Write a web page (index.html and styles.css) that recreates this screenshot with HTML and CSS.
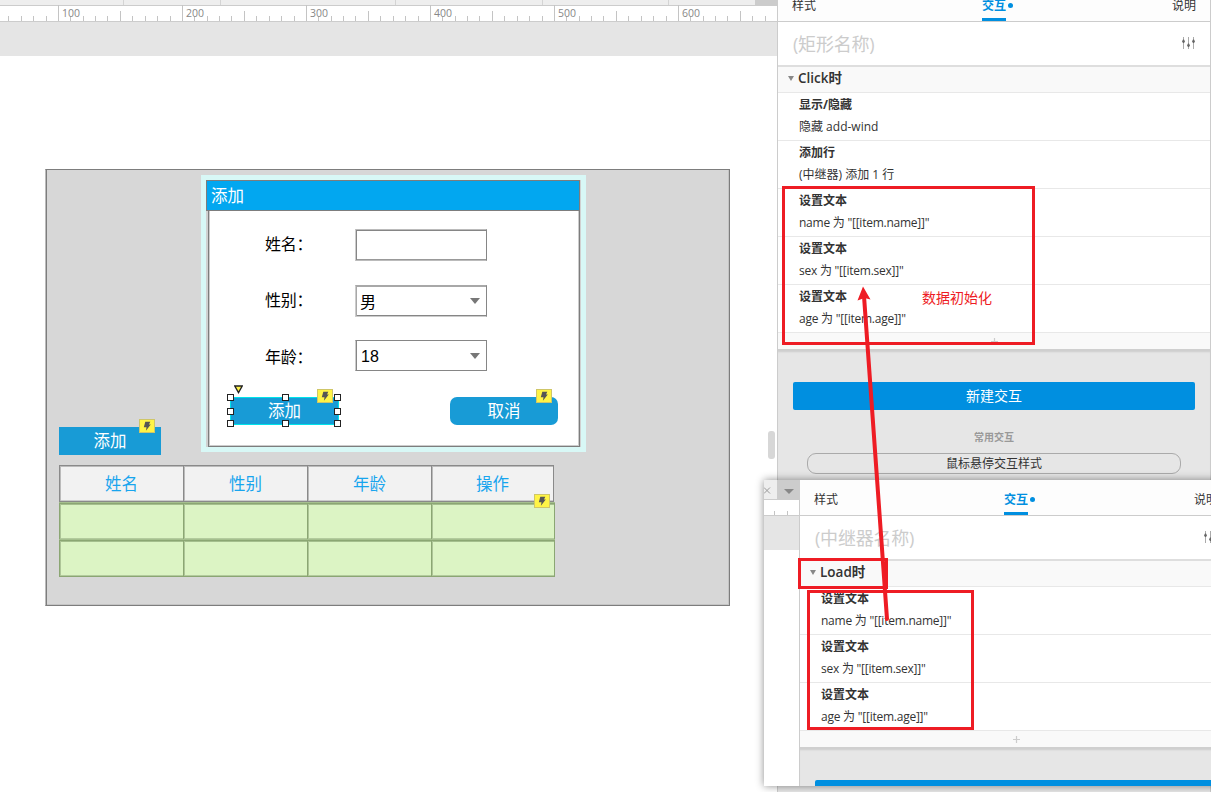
FILE: index.html
```html
<!DOCTYPE html>
<html lang="zh">
<head>
<meta charset="utf-8">
<title>交互</title>
<link rel="stylesheet" href="styles.css">
</head>
<body>
<svg class="defs" width="0" height="0">
  <defs>
    <g id="ticks">
      <path d="M0 0h1v16h-1zM62 6h1v10h-1zM12 11h1v5h-1zM25 11h1v5h-1zM37 11h1v5h-1zM49 11h1v5h-1zM74 11h1v5h-1zM87 11h1v5h-1zM99 11h1v5h-1zM112 11h1v5h-1z"/>
    </g>
    <symbol id="bolt" viewBox="1 1 14 12">
      <path d="M6.300 2.800h5l-1.300 2.700h1.800L6.900 11.800l.6-3.600H4.800z" fill="#555"/>
    </symbol>
    <symbol id="sliders" viewBox="0 0 13 12">
      <path d="M1.500 0v12M6.500 0v12M11.500 0v12" stroke="#aaa" fill="none"/>
      <path d="M0 4.500l1-2h1l1 2-1 1.500h-1zM5 8.500l1-2h1l1 2-1 1.500h-1zM10 4.500l1-2h1l1 2-1 1.500h-1z" fill="#666"/>
    </symbol>
    <symbol id="plus" viewBox="0 0 7 7">
      <path d="M3.500 0v7M0 3.500h7" stroke="#ccc" stroke-width="1.200"/>
    </symbol>
  </defs>
</svg>

<div class="app">
  <main class="workspace">
    <div class="doc-tabs"><i class="w1"></i><i class="w2"></i><i class="w3"></i><i class="w4"></i><i class="w5"></i><b></b></div>
    <div class="ruler">
      <svg width="777" height="16" fill="#c4c4c4" shape-rendering="crispEdges">
        <use href="#ticks" x="-66"/><use href="#ticks" x="58"/><use href="#ticks" x="182"/><use href="#ticks" x="306"/><use href="#ticks" x="430"/><use href="#ticks" x="554"/><use href="#ticks" x="678"/>
      </svg>
      <div class="marks"><span>100</span><span>200</span><span>300</span><span>400</span><span>500</span><span>600</span></div>
    </div>
    <div class="gutter"></div>

    <div class="canvas">
      <div class="page-frame"></div>
      <div class="glow"></div>
      <section class="dialog">
        <div class="dialog-body"></div>
        <h2 class="dialog-title">添加</h2>
      </section>
      <span class="label l1">姓名：</span>
      <span class="label l2">性别：</span>
      <span class="label l3">年龄：</span>
      <div class="field f1"></div>
      <div class="field f2">男<i class="caret"></i></div>
      <div class="field f3">18<i class="caret"></i></div>
      <div class="btn btn-cancel">取消</div>
      <div class="btn btn-ok">添加</div>
      <div class="btn btn-open">添加</div>
      <svg class="anchor" width="9" height="9"><path d="M.8 1h7.400L4.500 7.600z" fill="#fff34a" stroke="#222" stroke-width="1.300"/></svg>
      <div class="handles"><i></i><i></i><i></i><i></i><i class="void"></i><i></i><i></i><i></i><i></i></div>

      <div class="grid grid-head"><span>姓名</span><span>性别</span><span>年龄</span><span>操作</span></div>
      <div class="grid grid-row r1"><span></span><span></span><span></span><span></span></div>
      <div class="grid grid-row r2"><span></span><span></span><span></span><span></span></div>

      <svg class="flash e1"><use href="#bolt"/></svg>
      <svg class="flash e2"><use href="#bolt"/></svg>
      <svg class="flash e3"><use href="#bolt"/></svg>
      <svg class="flash e4"><use href="#bolt"/></svg>
      <div class="scroll-thumb"></div>
    </div>
  </main>

  <aside class="panel panel-main">
    <nav class="tabs"><span>样式</span><span class="active">交互</span><span>说明</span></nav>
    <div class="name-row"><span>(矩形名称)</span><svg width="13" height="12"><use href="#sliders"/></svg></div>
    <div class="event"><i></i><span>Click时</span></div>
    <div class="action first"><b>显示/隐藏</b><span>隐藏 add-wind</span></div>
    <div class="action"><b>添加行</b><span>(中继器) 添加 1 行</span></div>
    <div class="action"><b>设置文本</b><span class="expr">name 为 "[[item.name]]"</span></div>
    <div class="action"><b>设置文本</b><span class="expr">sex 为 "[[item.sex]]"</span></div>
    <div class="action"><b>设置文本</b><span class="expr">age 为 "[[item.age]]"</span></div>
    <div class="add-target"><svg width="7" height="7"><use href="#plus"/></svg></div>
    <div class="panel-foot">
      <div class="primary">新建交互</div>
      <div class="caption">常用交互</div>
      <div class="pill">鼠标悬停交互样式</div>
    </div>
  </aside>
</div>

<div class="window">
  <div class="window-side">
    <div class="side-tabs"><span><svg width="7" height="7"><path d="M0 .5l6 6M6 .5l-6 6" stroke="#999"/></svg></span><b><i class="caret"></i></b></div>
    <div class="side-ruler"><i></i><i></i></div>
    <div class="side-gutter"></div>
  </div>
  <aside class="panel">
    <nav class="tabs"><span>样式</span><span class="active">交互</span><span>说明</span></nav>
    <div class="name-row"><span>(中继器名称)</span><svg width="13" height="12"><use href="#sliders"/></svg></div>
    <div class="event"><i></i><span>Load时</span></div>
    <div class="action"><b>设置文本</b><span class="expr">name 为 "[[item.name]]"</span></div>
    <div class="action"><b>设置文本</b><span class="expr">sex 为 "[[item.sex]]"</span></div>
    <div class="action"><b>设置文本</b><span class="expr">age 为 "[[item.age]]"</span></div>
    <div class="add-target"><svg width="7" height="7"><use href="#plus"/></svg></div>
    <div class="panel-foot"><div class="primary"></div></div>
  </aside>
</div>

<div class="note n1"></div>
<div class="note n2"></div>
<div class="note n3"></div>
<div class="note-text">数据初始化</div>
<svg class="arrow" width="1211" height="792"><path d="M887 619L864 296" stroke="#ee1c24" stroke-width="4" stroke-linecap="round"/><path d="M863 286.500L870.500 299.500L864.500 298L857.500 300.500z" fill="#ee1c24"/></svg>
</body>
</html>
```

FILE: styles.css
```css
* { box-sizing: border-box; }
body {
  margin: 0;
  width: 1211px;
  height: 792px;
  overflow: hidden;
  position: relative;
  background: #fff;
  color: #333;
  font: 12px/16px "Open Sans", "Noto Sans CJK SC", sans-serif;
  white-space: nowrap;
}
svg { display: block; flex: none; }
.defs { position: absolute; }
i { font-style: normal; display: block; }
.app { display: flex; height: 792px; overflow: hidden; }

/* workspace */
.workspace { width: 777px; height: 792px; flex: none; display: flex; flex-direction: column; }
.doc-tabs { height: 5px; flex: none; background: #eee; display: flex; }
.doc-tabs i { border-right: 1px solid #d4d4d4; }
.doc-tabs .w1 { width: 124px; }
.doc-tabs .w2 { width: 97px; }
.doc-tabs .w3 { width: 175px; }
.doc-tabs .w4 { width: 147px; }
.doc-tabs .w5 { width: 126px; }
.doc-tabs b { margin-left: auto; width: 22px; background: #ccc; }
.ruler { height: 17px; flex: none; border-top: 1px solid #ccc; border-bottom: 1px solid #ccc; position: relative; }
.ruler svg { position: absolute; top: -1px; left: 0; }
.marks { display: flex; padding-left: 62px; font-size: 10.500px; line-height: 15px; color: #888; position: relative; }
.marks span { width: 124px; flex: none; }
.gutter { height: 34px; flex: none; background: #e5e5e5; }

/* free canvas: every widget sits at its own coordinates */
.canvas { flex: 1; margin-top: -56px; position: relative; font-size: 16.500px; line-height: 22px; }
.canvas > * { position: absolute; }
.page-frame { left: 45px; top: 169px; width: 685px; height: 437px; background: #d7d7d7; border: 1px solid #7d7d7d; border-left-color: #bbb; box-shadow: inset 1px 0 #7d7d7d, inset -1px -1px #c4c4c4; }
.glow { left: 201px; top: 175px; width: 385px; height: 277px; background: #d8f8f6; }
.dialog { left: 206px; top: 180px; width: 375px; height: 267px; background: #d0d0d0; }
.dialog-body { margin-left: 2px; height: 267px; width: 372px; background: #fff; border: 1px solid #7d7d7d; box-shadow: inset -1px -1px #ccc, inset 1px 0 #ccc; }
.dialog-title { margin: -267px 0 0; width: 374px; height: 31px; padding-left: 4px; background: #02a7f0; border: 1px solid #7d7d7d; color: #fff; font-size: 16.500px; font-weight: 400; line-height: 30px; }
.label { color: #000; font-size: 16px; letter-spacing: -.2px; }
.l1 { left: 265px; top: 233px; }
.l2 { left: 265px; top: 289px; }
.l3 { left: 265px; top: 346px; }
.field { left: 355px; width: 132px; height: 32px; padding: 2px 5px 0 4px; background: #fff; border: 1px solid #868686; border-left-color: #ccc; box-shadow: inset 1px 0 #868686; color: #000; font-size: 16px; display: flex; align-items: center; justify-content: space-between; }
.f1 { top: 229px; border-top-color: #bbb; border-bottom-color: #bbb; box-shadow: inset 1px 1px #868686, inset 0 -1px #999; }
.f2 { top: 285px; border-top-color: #a8a8a8; border-bottom-color: #ccc; box-shadow: inset 1px 1px #a8a8a8, inset 0 -1px #868686; }
.f3 { top: 340px; height: 31px; font-family: "Liberation Sans", sans-serif; padding-left: 5px; }
.caret { width: 0; height: 0; border: 5.500px solid transparent; border-top: 6px solid #777; border-bottom: 0; }
.field .caret { margin: -2px 1px 0 0; }
.btn { background: #189bd6; color: #fff; text-align: center; line-height: 27px; }
.btn-cancel { left: 450px; top: 397px; width: 108px; height: 28px; border-radius: 7px; }
.btn-ok { left: 230px; top: 397px; width: 109px; height: 28px; border: 1px solid #00e3ea; line-height: 26px; }
.btn-open { left: 59px; top: 427px; width: 102px; height: 28px; }
.anchor { left: 234px; top: 385px; }
.handles { left: 227px; top: 394px; display: grid; grid-template-columns: 55px 52px 7px; grid-template-rows: 14px 12px 7px; }
.handles i { width: 7px; height: 7px; background: #fff; border: 1px solid #222; }
.handles .void { visibility: hidden; }
.grid { left: 59px; display: flex; border: 1px solid #8a8a8a; box-shadow: inset 0 1px #bbb, inset 0 -1px #ccc; }
.grid span { width: 124px; text-align: center; border-left: 1px solid; border-color: inherit; box-shadow: inset 1px 0 #bbb; }
.grid span:first-child { border-left: 0; width: 123px; }
.grid span:last-child { flex: 1; }
.grid-head { top: 465px; width: 495px; height: 37px; background: #f2f2f2; color: #18a5ee; line-height: 36px; }
.grid-row { width: 496px; height: 37px; background: #dcf4c4; border-color: #8ba673; box-shadow: inset 0 1px #a5bf8e, inset 0 -1px #b3cb9d, 0 -1px #a5bf8e; }
.grid-row span { box-shadow: inset 1px 0 #aec598; }
.r1 { top: 503px; }
.r2 { top: 540px; }
.flash { width: 16px; height: 14px; background: #fff446; border: 1px solid #cfc668; }
.e1 { left: 317px; top: 389px; }
.e2 { left: 536px; top: 389px; }
.e3 { left: 139px; top: 419px; }
.e4 { left: 534px; top: 494px; }
.scroll-thumb { left: 768px; top: 431px; width: 7px; height: 28px; border-radius: 3px; background: #d7d7d7; }

/* interaction panel */
.panel { width: 434px; flex: none; background: #e6e6e6; border-left: 1px solid #ccc; border-right: 1px solid #ccc; }
.panel-main { margin-top: -14px; }
.tabs { height: 36px; padding: 0 14px; display: flex; justify-content: space-between; background: #fdfdfd; border-bottom: 1px solid #ccc; line-height: 40px; }
.tabs .active { position: relative; height: 35px; color: #008fe0; font-weight: 700; border-bottom: 3px solid #008fe0; }
.tabs .active::after { content: ""; position: absolute; left: 26px; top: 17px; width: 5px; height: 5px; border-radius: 50%; background: #008fe0; }
.name-row { height: 45px; padding: 0 15px; display: flex; align-items: center; justify-content: space-between; background: #fff; border-bottom: 2px solid #dedede; font-size: 18px; color: #ccc; }
.name-row span { letter-spacing: -.2px; }
.name-row svg { margin-top: -2px; }
.event { height: 26px; padding-left: 10px; display: flex; align-items: center; gap: 4px; background: #f9f9f9; border-bottom: 1px solid #e8e8e8; font-size: 13px; font-weight: 600; }
.event span { margin: -4px 0 0; font-size: 13.500px; }
.event i { margin-top: -2px; border: 3.500px solid transparent; border-top: 5px solid #888; border-bottom: 0; }
.action { height: 48px; padding: 4px 0 0 21px; background: #fff; border-bottom: 1px solid #e8e8e8; display: flex; flex-direction: column; gap: 6px; }
.action .expr { letter-spacing: -.24px; }
.add-target { height: 18px; background: #f9f9f9; border-bottom: 2px solid #cfcfcf; display: flex; align-items: center; justify-content: center; }
.panel-foot { padding: 31px 15px 0; text-align: center; box-shadow: inset 0 2px 2px -1px #ccc; }
.primary { height: 28px; border-radius: 2px; background: #008fe0; color: #fff; font-size: 14px; line-height: 28px; }
.caption { margin-top: 19px; font-size: 10px; font-weight: 700; color: #999; }
.pill { margin: 8px 14px 0; height: 21px; border: 1.500px solid #aaa; border-radius: 9px; line-height: 20px; }

/* floating window */
.window { position: absolute; left: 764px; top: 480px; width: 447px; height: 306px; overflow: hidden; display: flex; background: #fff; }
.app::after { content: ""; position: absolute; left: 764px; top: 480px; width: 460px; height: 306px; box-shadow: 0 0 8px rgba(0, 0, 0, .45); }
.window-side { width: 35px; flex: none; }
.side-tabs { height: 20px; display: flex; border-bottom: 1px solid #ccc; }
.side-tabs span { width: 13px; background: #eee; padding-top: 7px; }
.side-tabs b { width: 22px; height: 20px; background: #ccc; padding: 9px 0 0 7px; }
.side-ruler { height: 16px; display: flex; align-items: flex-end; gap: 12px; padding-left: 10px; border-bottom: 1px solid #ccc; }
.side-ruler i { width: 1px; height: 4px; background: #c4c4c4; }
.side-gutter { height: 34px; background: #e5e5e5; }
.window .caret { border-width: 5px 5px 0; border-top-color: #888; }

/* annotations */
.note { position: absolute; border: 3px solid #ee1c24; }
.n1 { left: 782px; top: 186px; width: 253px; height: 159px; }
.n2 { left: 798px; top: 558px; width: 90px; height: 31px; }
.n3 { left: 807px; top: 590px; width: 167px; height: 140px; }
.note-text { position: absolute; left: 922px; top: 290px; font-size: 14px; color: #ee1c24; }
.arrow { position: absolute; left: 0; top: 0; }
```
